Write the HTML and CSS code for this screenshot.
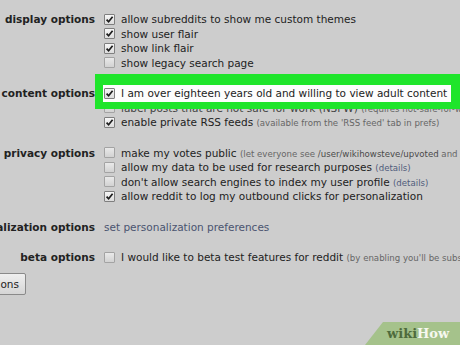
FILE: index.html
```
<!DOCTYPE html>
<html>
<head>
<meta charset="utf-8">
<link rel="stylesheet" href="styles.css">
</head>
<body>
<div class="prefs">
  <section class="sec">
    <div class="lab"><span>display options</span></div>
    <div class="opts">
      <div class="opt"><span class="cb"><svg viewBox="0 0 9 9"><path d="M1.6 4.6 L3.6 6.8 L7.6 1.8"/></svg></span><span>allow subreddits to show me custom themes</span></div>
      <div class="opt"><span class="cb"><svg viewBox="0 0 9 9"><path d="M1.6 4.6 L3.6 6.8 L7.6 1.8"/></svg></span><span>show user flair</span></div>
      <div class="opt"><span class="cb"><svg viewBox="0 0 9 9"><path d="M1.6 4.6 L3.6 6.8 L7.6 1.8"/></svg></span><span>show link flair</span></div>
      <div class="opt"><span class="cb off"></span><span>show legacy search page</span></div>
    </div>
  </section>

  <section class="sec">
    <div class="lab"><span>content options</span></div>
    <div class="opts">
      <div class="opt hl"><span class="cb"><svg viewBox="0 0 9 9"><path d="M1.6 4.6 L3.6 6.8 L7.6 1.8"/></svg></span><span>I am over eighteen years old and willing to view adult content</span></div>
      <div class="opt faded"><span class="cb off"></span><span>label posts that are not safe for work (NSFW) <span class="note">(requires not-safe-for-work content to be enabled)</span></span></div>
      <div class="opt"><span class="cb"><svg viewBox="0 0 9 9"><path d="M1.6 4.6 L3.6 6.8 L7.6 1.8"/></svg></span><span>enable private RSS feeds <span class="note">(available from the 'RSS feed' tab in prefs)</span></span></div>
    </div>
  </section>

  <section class="sec">
    <div class="lab"><span>privacy options</span></div>
    <div class="opts">
      <div class="opt"><span class="cb off"></span><span>make my votes public <span class="note">(let everyone see <span class="path">/user/wikihowsteve/upvoted</span> and /user/wikihowsteve/downvoted)</span></span></div>
      <div class="opt"><span class="cb off"></span><span>allow my data to be used for research purposes <span class="note link">(details)</span></span></div>
      <div class="opt"><span class="cb off"></span><span>don't allow search engines to index my user profile <span class="note link">(details)</span></span></div>
      <div class="opt"><span class="cb"><svg viewBox="0 0 9 9"><path d="M1.6 4.6 L3.6 6.8 L7.6 1.8"/></svg></span><span>allow reddit to log my outbound clicks for personalization</span></div>
    </div>
  </section>

  <section class="sec">
    <div class="lab"><span>personalization options</span></div>
    <div class="opts">
      <div class="opt"><span class="plink">set personalization preferences</span></div>
    </div>
  </section>

  <section class="sec last">
    <div class="lab"><span>beta options</span></div>
    <div class="opts">
      <div class="opt"><span class="cb off"></span><span>I would like to beta test features for reddit <span class="note">(by enabling you'll be subscribed to /r/beta)</span></span></div>
    </div>
  </section>

  <div class="save"><button class="btn">save options</button></div>
</div>

<div class="wh"><span class="wk">wiki</span><span class="hw">How</span></div>
</body>
</html>
```
FILE: styles.css
```
html, body {
  margin: 0;
  padding: 0;
}
body {
  width: 460px;
  height: 345px;
  overflow: hidden;
  position: relative;
  background: #cdcdcd;
  color: #222;
  font-family: "DejaVu Sans", Verdana, sans-serif;
  font-size: 10.5px;
}
.prefs {
  padding-top: 12px;
}
.sec {
  display: grid;
  grid-template-columns: 95px 1fr;
  column-gap: 8px;
  margin-bottom: 16px;
}
.sec.last {
  margin-bottom: 8px;
}
.lab {
  display: flex;
  justify-content: flex-end;
  font-weight: bold;
  white-space: nowrap;
  line-height: 14.5px;
  height: 14.5px;
}
.opts {
  min-width: 0;
}
.opt {
  display: flex;
  align-items: center;
  height: 14.5px;
  white-space: nowrap;
}
.opt.faded {
  color: #444;
}
.cb {
  flex: none;
  box-sizing: border-box;
  width: 11px;
  height: 11px;
  margin: 0 6px 0 1px;
  border: 1px solid #7f7f7f;
  border-radius: 1px;
  background: linear-gradient(#f7f7f7, #dcdcdc);
  display: flex;
}
.cb svg {
  width: 9px;
  height: 9px;
}
.cb path {
  fill: none;
  stroke: #1c1c1c;
  stroke-width: 1.7;
}
.cb.off {
  border-color: #a3a3a3;
  background: linear-gradient(#e9e9e9, #d2d2d2);
}
.note {
  font-size: 8.6px;
  color: #666;
}
.note .path {
  color: #4a4a4a;
}
.note.link {
  color: #505c7c;
}
.plink {
  margin-left: 1px;
  color: #4a5470;
}
.hl {
  position: relative;
  z-index: 1;
}
.hl::before {
  content: "";
  position: absolute;
  top: -12px;
  bottom: -8px;
  left: -8px;
  right: -2px;
  border-style: solid;
  border-color: #1fe52b;
  border-width: 11px 11px 7px 8px;
  background: #fdfdfd;
  z-index: -1;
}
.save {
  width: 26px;
  display: flex;
  justify-content: flex-end;
}
.btn {
  flex: none;
  height: 22px;
  padding: 0 6px;
  border: 1px solid #8a8a8a;
  border-radius: 2px;
  background: linear-gradient(#efefef, #d5d5d5);
  color: #222;
  font-family: "DejaVu Sans", Verdana, sans-serif;
  font-size: 10.5px;
  white-space: nowrap;
}
.wh {
  position: absolute;
  right: 0;
  bottom: 0;
  width: 95px;
  height: 23px;
  background: #a5c28b;
  clip-path: polygon(18px 0, 100% 0, 100% 100%, 0 100%);
  box-sizing: border-box;
  padding-left: 22px;
  font-family: "DejaVu Serif", serif;
  font-weight: bold;
  font-size: 13px;
  line-height: 23px;
}
.wk {
  color: #4e6b3c;
}
.hw {
  color: #f6f8f0;
}
```
